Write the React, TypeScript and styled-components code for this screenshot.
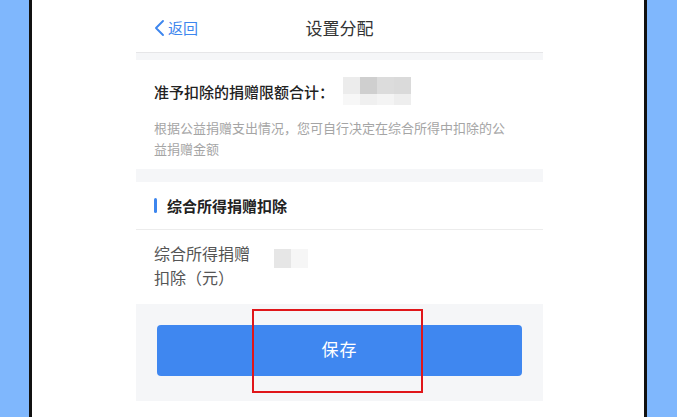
import React from "react";
import styled, { createGlobalStyle } from "styled-components";

const GlobalStyle = createGlobalStyle`
  html, body {
    margin: 0;
    padding: 0;
    background: #ffffff;
    font-family: "Noto Sans CJK SC", "Noto Sans", sans-serif;
  }
`;

const Frame = styled.div`
  display: flex;
  width: 677px;
  height: 417px;
  overflow: hidden;
`;

const Side = styled.div<{ $w: number }>`
  width: ${(p) => p.$w}px;
  flex-shrink: 0;
  background: #7fb7fd;
`;

const Edge = styled.div`
  width: 3px;
  flex-shrink: 0;
  background: #111111;
`;

const Stage = styled.div`
  flex: 1;
  background: #ffffff;
  padding-left: 104px;
`;

const Screen = styled.div`
  width: 407px;
  display: flex;
  flex-direction: column;
`;

const NavBar = styled.div`
  position: relative;
  display: flex;
  align-items: center;
  height: 53px;
  padding-top: 3px;
  box-sizing: border-box;
  border-bottom: 1px solid #e6e6e8;
`;

const Back = styled.div`
  display: flex;
  align-items: center;
  gap: 3px;
  padding-left: 17px;
  color: #3d86ee;
  font-size: 15px;
`;

const Title = styled.div`
  position: absolute;
  left: 0;
  right: 0;
  top: 15px;
  text-align: center;
  font-size: 17px;
  color: #333333;
  pointer-events: none;
`;

const Gap = styled.div<{ $h: number }>`
  height: ${(p) => p.$h}px;
  background: #f5f6f8;
`;

const Section = styled.div`
  background: #ffffff;
`;

const LimitRow = styled.div`
  display: flex;
  align-items: center;
  gap: 9px;
  padding: 17px 18px 0;
  height: 28px;
`;

const LimitLabel = styled.div`
  font-size: 15px;
  font-weight: 500;
  color: #222222;
`;

const Mosaic = styled.div<{ $cols: number; $cell: number }>`
  display: grid;
  grid-template-columns: repeat(${(p) => p.$cols}, ${(p) => p.$cell}px);
`;

const Cell = styled.div<{ $c: string; $h: number }>`
  height: ${(p) => p.$h}px;
  background: ${(p) => p.$c};
`;

const Hint = styled.p`
  margin: 0;
  padding: 13px 18px 10px;
  font-size: 13px;
  letter-spacing: 0;
  line-height: 20.5px;
  white-space: nowrap;
  color: #a5a5a5;
`;

const GroupHead = styled.div`
  display: flex;
  align-items: center;
  gap: 10px;
  height: 47px;
  padding: 0 18px;
  border-bottom: 1px solid #ececec;
`;

const Bar = styled.div`
  width: 3px;
  height: 15px;
  border-radius: 2px;
  background: #3d86ee;
`;

const GroupTitle = styled.div`
  font-size: 15px;
  font-weight: 700;
  color: #222222;
`;

const FieldRow = styled.div`
  display: flex;
  align-items: flex-start;
  gap: 22px;
  height: 74px;
  padding: 12px 18px 0;
  box-sizing: border-box;
`;

const FieldLabel = styled.div`
  width: 98px;
  font-size: 16px;
  line-height: 23.5px;
  color: #555555;
`;

const FieldValue = styled.div`
  padding-top: 7px;
`;

const Footer = styled.div`
  position: relative;
  height: 97px;
  background: #f5f6f8;
  padding: 21px 21px 0;
  box-sizing: border-box;
`;

const SaveButton = styled.button`
  display: flex;
  align-items: center;
  justify-content: center;
  width: 365px;
  height: 51px;
  padding: 0 0 4px;
  border: none;
  border-radius: 4px;
  background: #3f87f0;
  color: #ffffff;
  font-family: inherit;
  font-size: 17px;
  letter-spacing: 1px;
`;

const Highlight = styled.div`
  position: absolute;
  left: 116px;
  top: 5px;
  width: 171px;
  height: 84px;
  border: 2.5px solid #e0161a;
  box-sizing: border-box;
`;

const Chevron = () => (
  <svg width="12" height="18" viewBox="0 0 12 18">
    <path d="M10 2 L3 9 L10 16" fill="none" stroke="#3d86ee" strokeWidth="1.9" strokeLinecap="round" strokeLinejoin="round" />
  </svg>
);

const bigBlur = ["#ececec", "#cfcfcf", "#dcdcdc", "#dadada", "#f7f7f7", "#f0f0f0", "#f4f4f4", "#eeeeee"];
const smallBlur = ["#e6e6e6", "#f6f6f6"];

export default function App() {
  return (
    <>
      <GlobalStyle />
      <Frame>
        <Side $w={29} />
        <Edge />
        <Stage>
          <Screen>
            <NavBar>
              <Back>
                <Chevron />
                <span>返回</span>
              </Back>
              <Title>设置分配</Title>
            </NavBar>
            <Gap $h={7} />
            <Section>
              <LimitRow>
                <LimitLabel>准予扣除的捐赠限额合计：</LimitLabel>
                <Mosaic $cols={4} $cell={17}>
                  {bigBlur.map((c, i) => (
                    <Cell key={i} $c={c} $h={i < 4 ? 17 : 11} />
                  ))}
                </Mosaic>
              </LimitRow>
              <Hint>
                根据公益捐赠支出情况，您可自行决定在综合所得中扣除的公
                <br />
                益捐赠金额
              </Hint>
            </Section>
            <Gap $h={13} />
            <Section>
              <GroupHead>
                <Bar />
                <GroupTitle>综合所得捐赠扣除</GroupTitle>
              </GroupHead>
              <FieldRow>
                <FieldLabel>
                  综合所得捐赠
                  <br />
                  扣除（元）
                </FieldLabel>
                <FieldValue>
                  <Mosaic $cols={2} $cell={17}>
                    {smallBlur.map((c, i) => (
                      <Cell key={i} $c={c} $h={19} />
                    ))}
                  </Mosaic>
                </FieldValue>
              </FieldRow>
            </Section>
            <Footer>
              <SaveButton>保存</SaveButton>
              <Highlight />
            </Footer>
          </Screen>
        </Stage>
        <Edge />
        <Side $w={30} />
      </Frame>
    </>
  );
}
